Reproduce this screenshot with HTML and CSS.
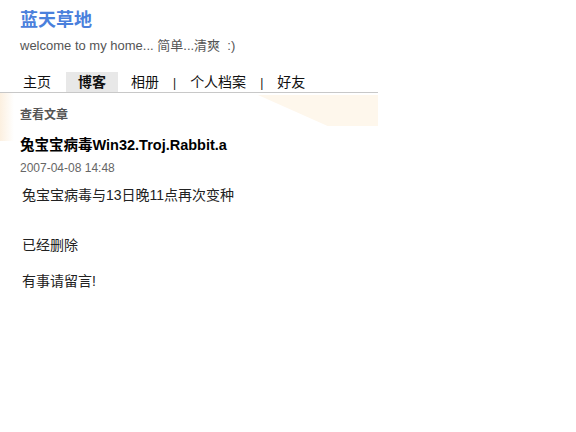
FILE: index.html
```html
<!DOCTYPE html>
<html lang="zh-CN">
<head>
    <meta charset="UTF-8">
    <title>蓝天草地</title>
    <link rel="stylesheet" href="styles.css">
</head>
<body>
    <div class="page">
        <div class="header">
            <h1 class="site-title">蓝天草地</h1>
            <div class="site-desc">welcome to my home... 简单...清爽 &nbsp;:)</div>
        </div>
        <ul class="nav">
            <li class="first">主页</li>
            <li class="active">博客</li>
            <li>相册</li>
            <li class="sep">|</li>
            <li>个人档案</li>
            <li class="sep">|</li>
            <li>好友</li>
        </ul>
        <div class="content">
            <div class="section-title">查看文章</div>
            <div class="post-title">兔宝宝病毒Win32.Troj.Rabbit.a</div>
            <div class="post-date">2007-04-08 14:48</div>
            <div class="post-body">
                <p>兔宝宝病毒与13日晚11点再次变种</p>
                <p class="gap">已经删除</p>
                <p class="last">有事请留言!</p>
            </div>
        </div>
    </div>
</body>
</html>
```

FILE: styles.css
```css
body {
    margin: 0;
    background: #fff;
    font-family: "Liberation Sans", Arial, "Noto Sans CJK SC", sans-serif;
    color: #000;
}
.page {
    width: 378px;
}
.header {
    padding: 8px 0 0 20px;
}
.site-title {
    margin: 0;
    font-size: 18px;
    font-weight: bold;
    color: #4a80dc;
    line-height: 24px;
}
.site-desc {
    margin-top: 6px;
    font-size: 13px;
    color: #555;
    line-height: 16px;
}
.nav {
    list-style: none;
    margin: 18px 0 0;
    padding: 0;
    display: flex;
    align-items: flex-end;
    border-bottom: 1px solid #c8c8c8;
    height: 20px;
}
.nav li {
    font-size: 14px;
    line-height: 20px;
    margin-left: 13px;
    color: #111;
}
.nav li.first {
    margin-left: 23px;
}
.nav li.active {
    background: #e8e8e8;
    font-weight: bold;
    margin-left: 15px;
    padding: 0 12px;
}
.nav li.sep {
    margin-left: 14px;
    font-size: 12px;
    line-height: 18px;
}
.nav li.sep + li {
    margin-left: 14px;
}
/* faint peach wash under the menu */
.content {
    position: relative;
    padding: 14px 0 0 20px;
    background: linear-gradient(90deg, #fcf0e0 0, #fff 14px);
    background-size: 100% 48px;
    background-repeat: no-repeat;
}
.content::before {
    content: "";
    position: absolute;
    top: 2px;
    right: 0;
    width: 120px;
    height: 31px;
    background: #fef7ec;
    clip-path: polygon(0 0, 100% 0, 100% 100%, 58% 100%);
}
.content > div {
    position: relative;
}
.section-title {
    font-size: 12px;
    font-weight: bold;
    color: #555;
    line-height: 16px;
}
.post-title {
    margin-top: 13px;
    font-size: 14.5px;
    font-weight: bold;
    line-height: 18px;
}
.post-date {
    margin-top: 6px;
    font-size: 12px;
    color: #666;
    line-height: 16px;
}
.post-body {
    font-size: 14px;
    color: #222;
}
.post-body p {
    margin: 10px 0 0 2px;
    line-height: 18px;
}
.post-body p.gap {
    margin-top: 32px;
}
.post-body p.last {
    margin-top: 18px;
}
```
